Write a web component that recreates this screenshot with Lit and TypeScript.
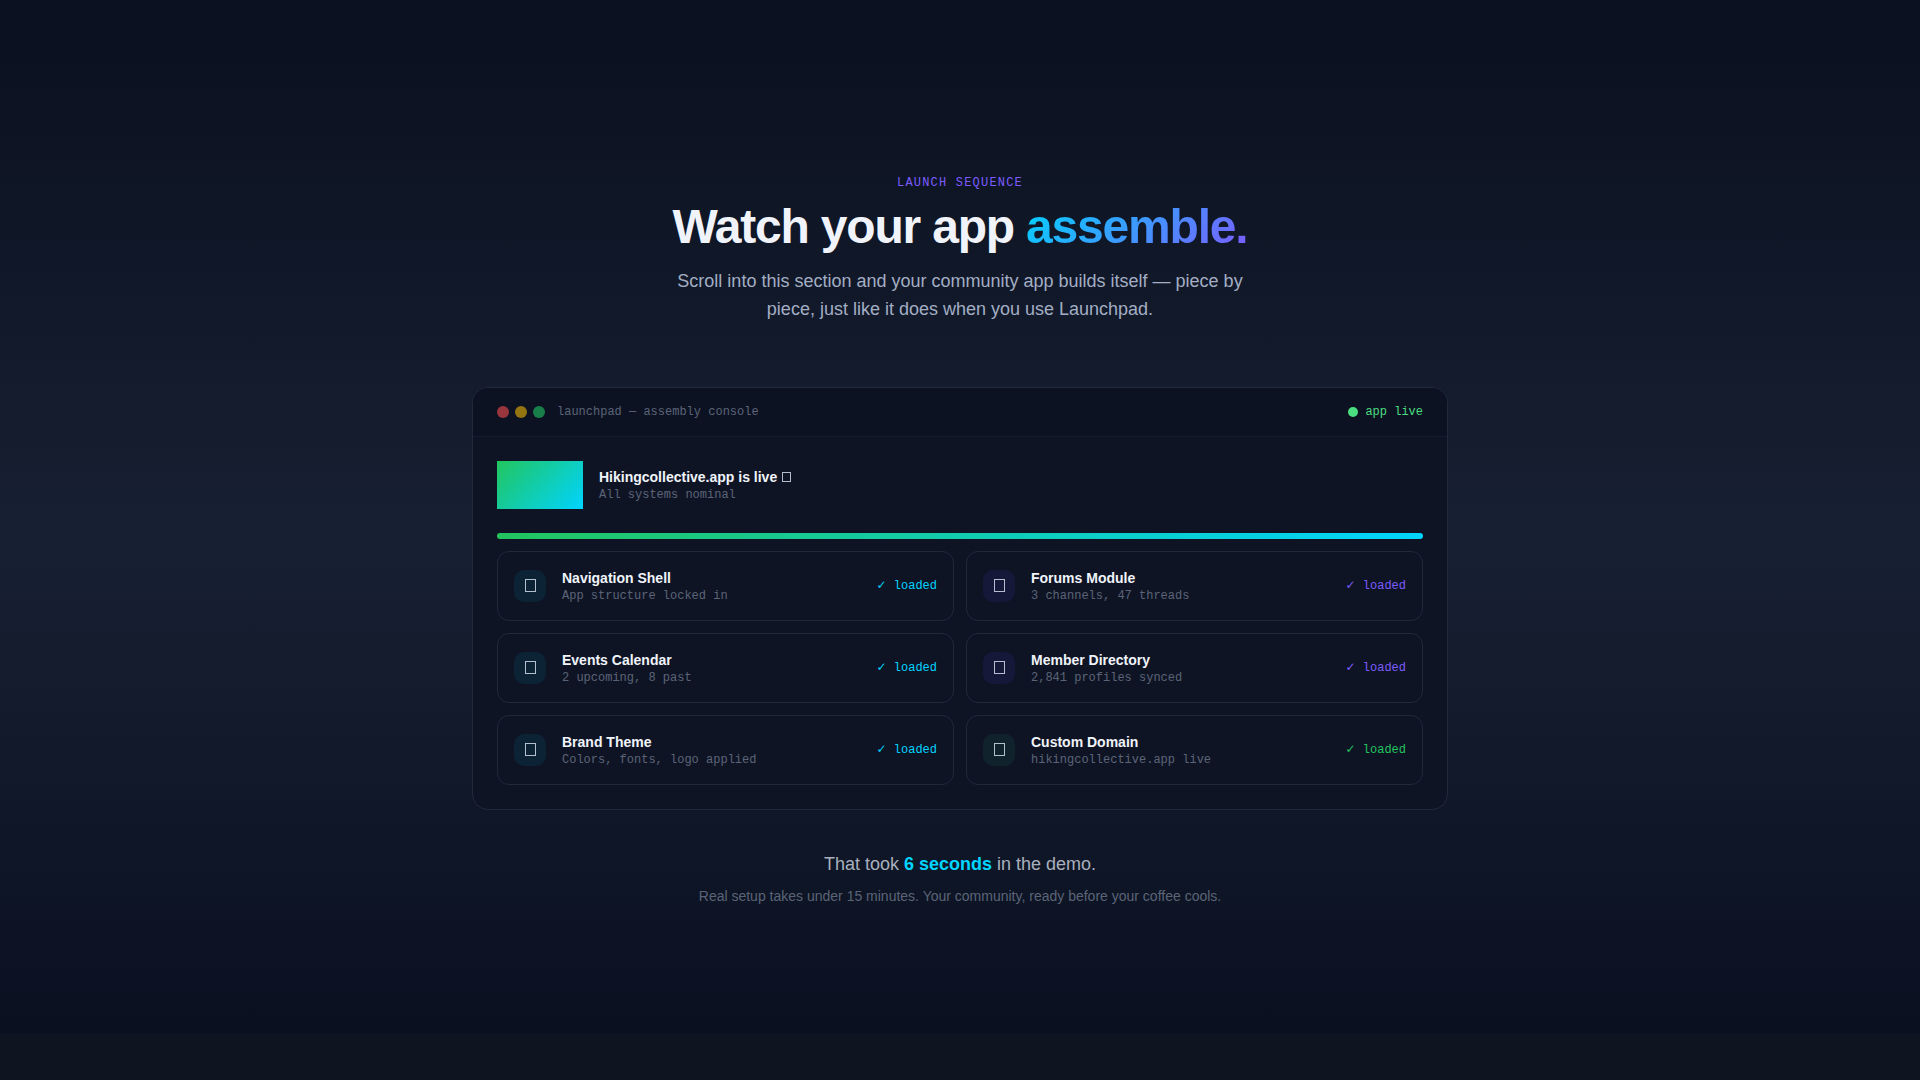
import { LitElement, html, css } from "lit";
import { customElement, property } from "lit/decorators.js";

type Tone = "cyan" | "violet" | "green";

interface Module {
  name: string;
  detail: string;
  tone: Tone;
}

const MODULES: Module[] = [
  { name: "Navigation Shell", detail: "App structure locked in", tone: "cyan" },
  { name: "Forums Module", detail: "3 channels, 47 threads", tone: "violet" },
  { name: "Events Calendar", detail: "2 upcoming, 8 past", tone: "cyan" },
  { name: "Member Directory", detail: "2,841 profiles synced", tone: "violet" },
  { name: "Brand Theme", detail: "Colors, fonts, logo applied", tone: "cyan" },
  { name: "Custom Domain", detail: "hikingcollective.app live", tone: "green" },
];

@customElement("module-card")
export class ModuleCard extends LitElement {
  @property({ attribute: false }) module!: Module;

  static styles = css`
    :host {
      display: block;
    }
    .card {
      display: flex;
      align-items: center;
      gap: 16px;
      padding: 16px;
      border: 1px solid #21283a;
      border-radius: 12px;
    }
    .icon {
      display: grid;
      place-items: center;
      flex: none;
      width: 32px;
      height: 32px;
      border-radius: 10px;
      color: #b4c0cf;
    }
    .glyph {
      display: block;
      width: 12px;
      height: 14px;
    }
    .text {
      flex: 1;
      min-width: 0;
    }
    .name {
      margin: 0;
      font-size: 14px;
      line-height: 20px;
      font-weight: 700;
      color: #f0f4fa;
    }
    .detail,
    .status {
      margin: 0;
      font-family: "Liberation Mono", "DejaVu Sans", monospace;
      font-size: 12px;
      line-height: 16px;
    }
    .detail {
      color: #5b6477;
    }
    .cyan .icon { background: #0c2235; }
    .violet .icon { background: #16183a; }
    .green .icon { background: #10222c; }
    .cyan .status { color: #00d4ff; }
    .violet .status { color: #7c5cff; }
    .green .status { color: #22c55e; }
  `;

  render() {
    const { name, detail, tone } = this.module;
    return html`
      <article class="card ${tone}">
        <span class="icon" aria-hidden="true">
          <svg class="glyph" viewBox="0 0 12 14" fill="none" stroke="currentColor">
            <rect x="1.5" y="0.5" width="10" height="12" />
          </svg>
        </span>
        <div class="text">
          <h3 class="name">${name}</h3>
          <p class="detail">${detail}</p>
        </div>
        <span class="status">✓ loaded</span>
      </article>
    `;
  }
}

@customElement("app-root")
export class AppRoot extends LitElement {
  static styles = css`
    :host {
      display: block;
      box-sizing: border-box;
      min-height: 100vh;
      padding-top: 47px;
      background: linear-gradient(#0b1120, #0b1120) top / 100% 47px no-repeat, #0e1420;
      font-family: "Liberation Sans", Arial, sans-serif;
      color: #f0f4fa;
    }
    .launch {
      padding: 128px 24px;
      background: linear-gradient(180deg, #0b1120 0%, #172032 50%, #0a1020 100%);
    }
    .inner {
      max-width: 976px;
      margin: 0 auto;
    }
    .intro {
      text-align: center;
      margin-bottom: 64px;
    }
    .eyebrow {
      margin: 0 0 12px;
      font-family: "Liberation Mono", monospace;
      font-size: 12px;
      line-height: 16px;
      letter-spacing: 0.1em;
      text-transform: uppercase;
      color: #7c5cff;
    }
    .title {
      margin: 0 0 16px;
      font-size: 48px;
      line-height: 48px;
      font-weight: 700;
      letter-spacing: -0.025em;
    }
    .accent {
      background: linear-gradient(135deg, #00d4ff, #7c5cff);
      -webkit-background-clip: text;
      background-clip: text;
      color: transparent;
    }
    .lead {
      max-width: 576px;
      margin: 0 auto;
      font-size: 18px;
      line-height: 28px;
      color: #a3aec4;
    }
    .console {
      border: 1px solid #212a3b;
      border-radius: 16px;
      overflow: hidden;
      background: #0f1425;
    }
    .bar {
      display: flex;
      align-items: center;
      padding: 16px 24px;
      border-bottom: 1px solid #161c2d;
      background: #0d1222;
      font-family: "Liberation Mono", monospace;
      font-size: 12px;
      line-height: 16px;
    }
    .lights {
      display: flex;
      gap: 6px;
      margin-right: 12px;
    }
    .light {
      width: 12px;
      height: 12px;
      border-radius: 50%;
    }
    .close { background: #98353d; }
    .minimize { background: #957511; }
    .zoom { background: #197f4a; }
    .path {
      color: #5b6477;
    }
    .live {
      display: flex;
      align-items: center;
      gap: 7px;
      margin-left: auto;
      color: #4ade80;
    }
    .dot {
      width: 10px;
      height: 10px;
      border-radius: 50%;
      background: #4ade80;
    }
    .body {
      padding: 24px;
    }
    .summary {
      display: flex;
      align-items: center;
      gap: 16px;
      margin-bottom: 24px;
    }
    .badge {
      width: 86px;
      height: 48px;
      background: linear-gradient(135deg, #22c55e, #00d4ff);
    }
    .app {
      margin: 0;
      font-size: 14px;
      line-height: 20px;
      font-weight: 700;
    }
    .mark {
      width: 11px;
      height: 10px;
      color: #b4bccb;
    }
    .note {
      margin: 0;
      font-family: "Liberation Mono", monospace;
      font-size: 12px;
      line-height: 16px;
      color: #5b6477;
    }
    .progress {
      height: 6px;
      margin-bottom: 12px;
      border-radius: 3px;
      background: linear-gradient(90deg, #22c55e, #00d4ff);
    }
    .modules {
      display: grid;
      grid-template-columns: repeat(2, minmax(0, 1fr));
      gap: 12px;
    }
    .outro {
      margin-top: 40px;
      text-align: center;
    }
    .took {
      margin: 0 0 8px;
      font-size: 18px;
      line-height: 28px;
      color: #a8b0be;
    }
    .seconds {
      color: #00d4ff;
    }
    .fine {
      margin: 0;
      font-size: 14px;
      line-height: 20px;
      color: #5b6477;
    }
  `;

  render() {
    return html`
      <section class="launch">
        <div class="inner">
          <header class="intro">
            <p class="eyebrow">Launch Sequence</p>
            <h2 class="title">Watch your app <span class="accent">assemble.</span></h2>
            <p class="lead">
              Scroll into this section and your community app builds itself — piece by piece, just
              like it does when you use Launchpad.
            </p>
          </header>
          <div class="console">
            <div class="bar">
              <div class="lights" aria-hidden="true">
                <span class="light close"></span>
                <span class="light minimize"></span>
                <span class="light zoom"></span>
              </div>
              <span class="path">launchpad — assembly console</span>
              <span class="live"><span class="dot"></span>app live</span>
            </div>
            <div class="body">
              <div class="summary">
                <div class="badge"></div>
                <div>
                  <p class="app">
                    Hikingcollective.app is live
                    <svg class="mark" viewBox="0 0 11 10" fill="none" stroke="currentColor" aria-hidden="true">
                      <rect x="1.5" y="0.5" width="8" height="9" />
                    </svg>
                  </p>
                  <p class="note">All systems nominal</p>
                </div>
              </div>
              <div class="progress" role="progressbar" aria-label="Assembly" aria-valuenow="100"></div>
              <div class="modules">
                ${MODULES.map((m) => html`<module-card .module=${m}></module-card>`)}
              </div>
            </div>
          </div>
          <footer class="outro">
            <p class="took">That took <strong class="seconds">6 seconds</strong> in the demo.</p>
            <p class="fine">
              Real setup takes under 15 minutes. Your community, ready before your coffee cools.
            </p>
          </footer>
        </div>
      </section>
    `;
  }
}
